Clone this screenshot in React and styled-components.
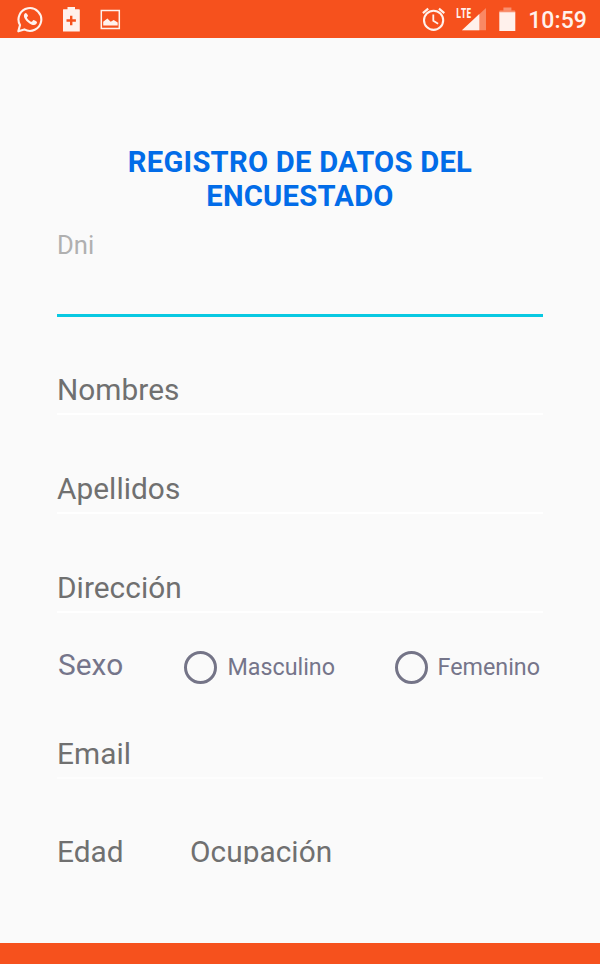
import React from "react";
import styled, { createGlobalStyle } from "styled-components";

const GlobalStyle = createGlobalStyle`
  * { box-sizing: border-box; }
  body { margin: 0; background: #fafafa; }
`;

const Screen = styled.div`
  width: 600px;
  height: 964px;
  display: flex;
  flex-direction: column;
  background: #fafafa;
  font-family: Roboto, "Liberation Sans", sans-serif;
  overflow: hidden;
`;

const StatusBar = styled.header`
  flex: none;
  height: 38px;
  padding: 0 13px 0 16px;
  display: flex;
  justify-content: space-between;
  background: #f6511d;
  color: #fff1ec;
`;

const StatusGroup = styled.div`
  display: flex;
  align-items: flex-start;
  gap: ${(p) => p.$gap}px;

  svg { display: block; flex: none; }
`;

const Clock = styled.time`
  font-size: 23px;
  font-weight: 500;
  line-height: 41px;
  letter-spacing: 0.1px;
`;

const Form = styled.main`
  flex: none;
  height: 826px;
  padding: 108px 57px 0;
  overflow: hidden;
`;

const Title = styled.h1`
  margin: 0;
  font-size: 29.2px;
  font-weight: 700;
  line-height: 33.5px;
  letter-spacing: 0.25px;
  text-align: center;
  color: #026ce8;
  white-space: nowrap;
`;

const ActiveField = styled.label`
  display: flex;
  flex-direction: column;
  justify-content: space-between;
  height: 87px;
  margin: 17px 0 -1px;
  border-bottom: 3px solid #08c9e2;
  font-size: 25.6px;
  line-height: 30px;
  color: #b0b0b0;
`;

const Field = styled.label`
  display: flex;
  align-items: flex-end;
  flex: none;
  width: ${(p) => p.$width || "auto"};
  height: ${(p) => p.$height || "99px"};
  padding-bottom: 5px;
  border-bottom: 2px solid ${(p) => p.$line || "#ffffff"};
  font-size: 29.8px;
  line-height: 36px;
  letter-spacing: 0.05px;
  color: #707070;
`;

const GenderRow = styled.div`
  display: flex;
  align-items: center;
  height: 46px;
  padding: 0 3px 0 1px;
  margin-top: 31px;
  color: #75758a;
`;

const GenderLabel = styled.span`
  width: 127px;
  padding-bottom: 4px;
  font-size: 29.8px;
  line-height: 36px;
  letter-spacing: 0.05px;
`;

const Option = styled.label`
  display: flex;
  align-items: center;
  gap: 10px;
  width: ${(p) => p.$width};
  font-size: 23.3px;
  line-height: 30px;
`;

const RadioRing = styled.span`
  flex: none;
  width: 33px;
  height: 33px;
  border: 3.5px solid #747487;
  border-radius: 50%;
`;

const FieldRow = styled.div`
  display: flex;
`;

const NavigationBar = styled.footer`
  flex: none;
  height: 21px;
  margin-top: auto;
  background: #f6511d;
`;

const WhatsAppIcon = () => (
  <svg width="28" height="38" viewBox="0 0 28 38" fill="none">
    <path d="M2.3 31.3 4 25.1a11.4 11.4 0 1 1 4.3 4.3Z" stroke="currentColor" strokeWidth="2.1" strokeLinejoin="round" />
    <path d="M10.2 13.2c-.5-.2-1.2 0-1.6.5-3 3.4 4.6 11.3 9.2 11.3 2 0 3.4-1.6 3.2-3.1-.1-.5-3-1.9-3.5-1.9-.7 0-1.2 1.8-1.8 1.8-1.2 0-4.8-3.2-4.8-4.4 0-.5 1.2-1.1 1.1-1.7 0-.5-1-2.3-1.8-2.5Z" fill="currentColor" />
  </svg>
);

const BatterySaverIcon = () => (
  <svg width="18" height="38" viewBox="0 0 18 38">
    <path d="M4.5 7h7.5v2.3h4q.8 0 .8.8v21.4H-.2V10.1q0-.8.8-.8h3.9Z" fill="currentColor" />
    <path d="M8.2 15.8v9.4M3.5 20.5h9.4" stroke="#f6511d" strokeWidth="2.4" />
  </svg>
);

const PictureIcon = () => (
  <svg width="21" height="38" viewBox="0 0 21 38">
    <path d="M1.3 10.4h18v18h-18Z" fill="none" stroke="currentColor" strokeWidth="1.5" />
    <path d="M3.2 25.4v-3.6l4.2-3.2 3.3 3.2 3-1.8 4 2.6v2.8Z" fill="currentColor" />
  </svg>
);

const AlarmIcon = () => (
  <svg width="24" height="38" viewBox="0 0 24 38" fill="none" stroke="currentColor">
    <circle cx="11.6" cy="20.3" r="9.6" strokeWidth="2.1" />
    <path d="m.9 13.1 5.3-4.4M22.3 13.1 17 8.7" strokeWidth="2.2" />
    <path d="M11.3 14.5v6.2l4.8 3" strokeWidth="1.8" />
  </svg>
);

const SignalBox = styled.div`
  position: relative;
  width: 31px;
  height: 38px;
  margin: 0 1px 0 -1px;
`;

const NetworkType = styled.span`
  position: absolute;
  left: 0;
  top: 7px;
  font-family: "Open Sans", sans-serif;
  font-size: 14.5px;
  font-weight: 700;
  line-height: 12px;
  transform: scaleX(0.62);
  transform-origin: left;
`;

const SignalIcon = () => (
  <svg width="31" height="38" viewBox="0 0 31 38">
    <path d="M6 30.3 30 8v22.3Z" fill="currentColor" opacity=".35" />
    <path d="M6 30.3 23.3 14v16.3Z" fill="currentColor" />
  </svg>
);

const BatteryIcon = () => (
  <svg width="18" height="38" viewBox="0 0 18 38">
    <path d="M4.4 7.5h8v3h-8Z" fill="currentColor" opacity=".4" />
    <path d="M1.3 10.5h14q1 0 1 1v1H.3v-1q0-1 1-1Z" fill="currentColor" opacity=".4" />
    <path d="M.3 12.2h16V31H.3Z" fill="currentColor" />
  </svg>
);

export default function App() {
  return (
    <>
      <GlobalStyle />
      <Screen>
        <StatusBar>
          <StatusGroup $gap={19}>
            <WhatsAppIcon />
            <BatterySaverIcon />
            <PictureIcon />
          </StatusGroup>
          <StatusGroup $gap={11}>
            <AlarmIcon />
            <SignalBox>
              <SignalIcon />
              <NetworkType>LTE</NetworkType>
            </SignalBox>
            <BatteryIcon />
            <Clock>10:59</Clock>
          </StatusGroup>
        </StatusBar>
        <Form>
          <Title>
            REGISTRO DE DATOS DEL
            <br />
            ENCUESTADO
          </Title>
          <ActiveField>Dni</ActiveField>
          <Field>Nombres</Field>
          <Field>Apellidos</Field>
          <Field>Dirección</Field>
          <GenderRow>
            <GenderLabel>Sexo</GenderLabel>
            <Option $width="211px">
              <RadioRing />
              Masculino
            </Option>
            <Option $width="auto">
              <RadioRing />
              Femenino
            </Option>
          </GenderRow>
          <Field $height="89px" $line="#fdfdfd">Email</Field>
          <FieldRow>
            <Field $width="133px" $height="98px">Edad</Field>
            <Field $height="98px">Ocupación</Field>
          </FieldRow>
        </Form>
        <NavigationBar />
      </Screen>
    </>
  );
}
